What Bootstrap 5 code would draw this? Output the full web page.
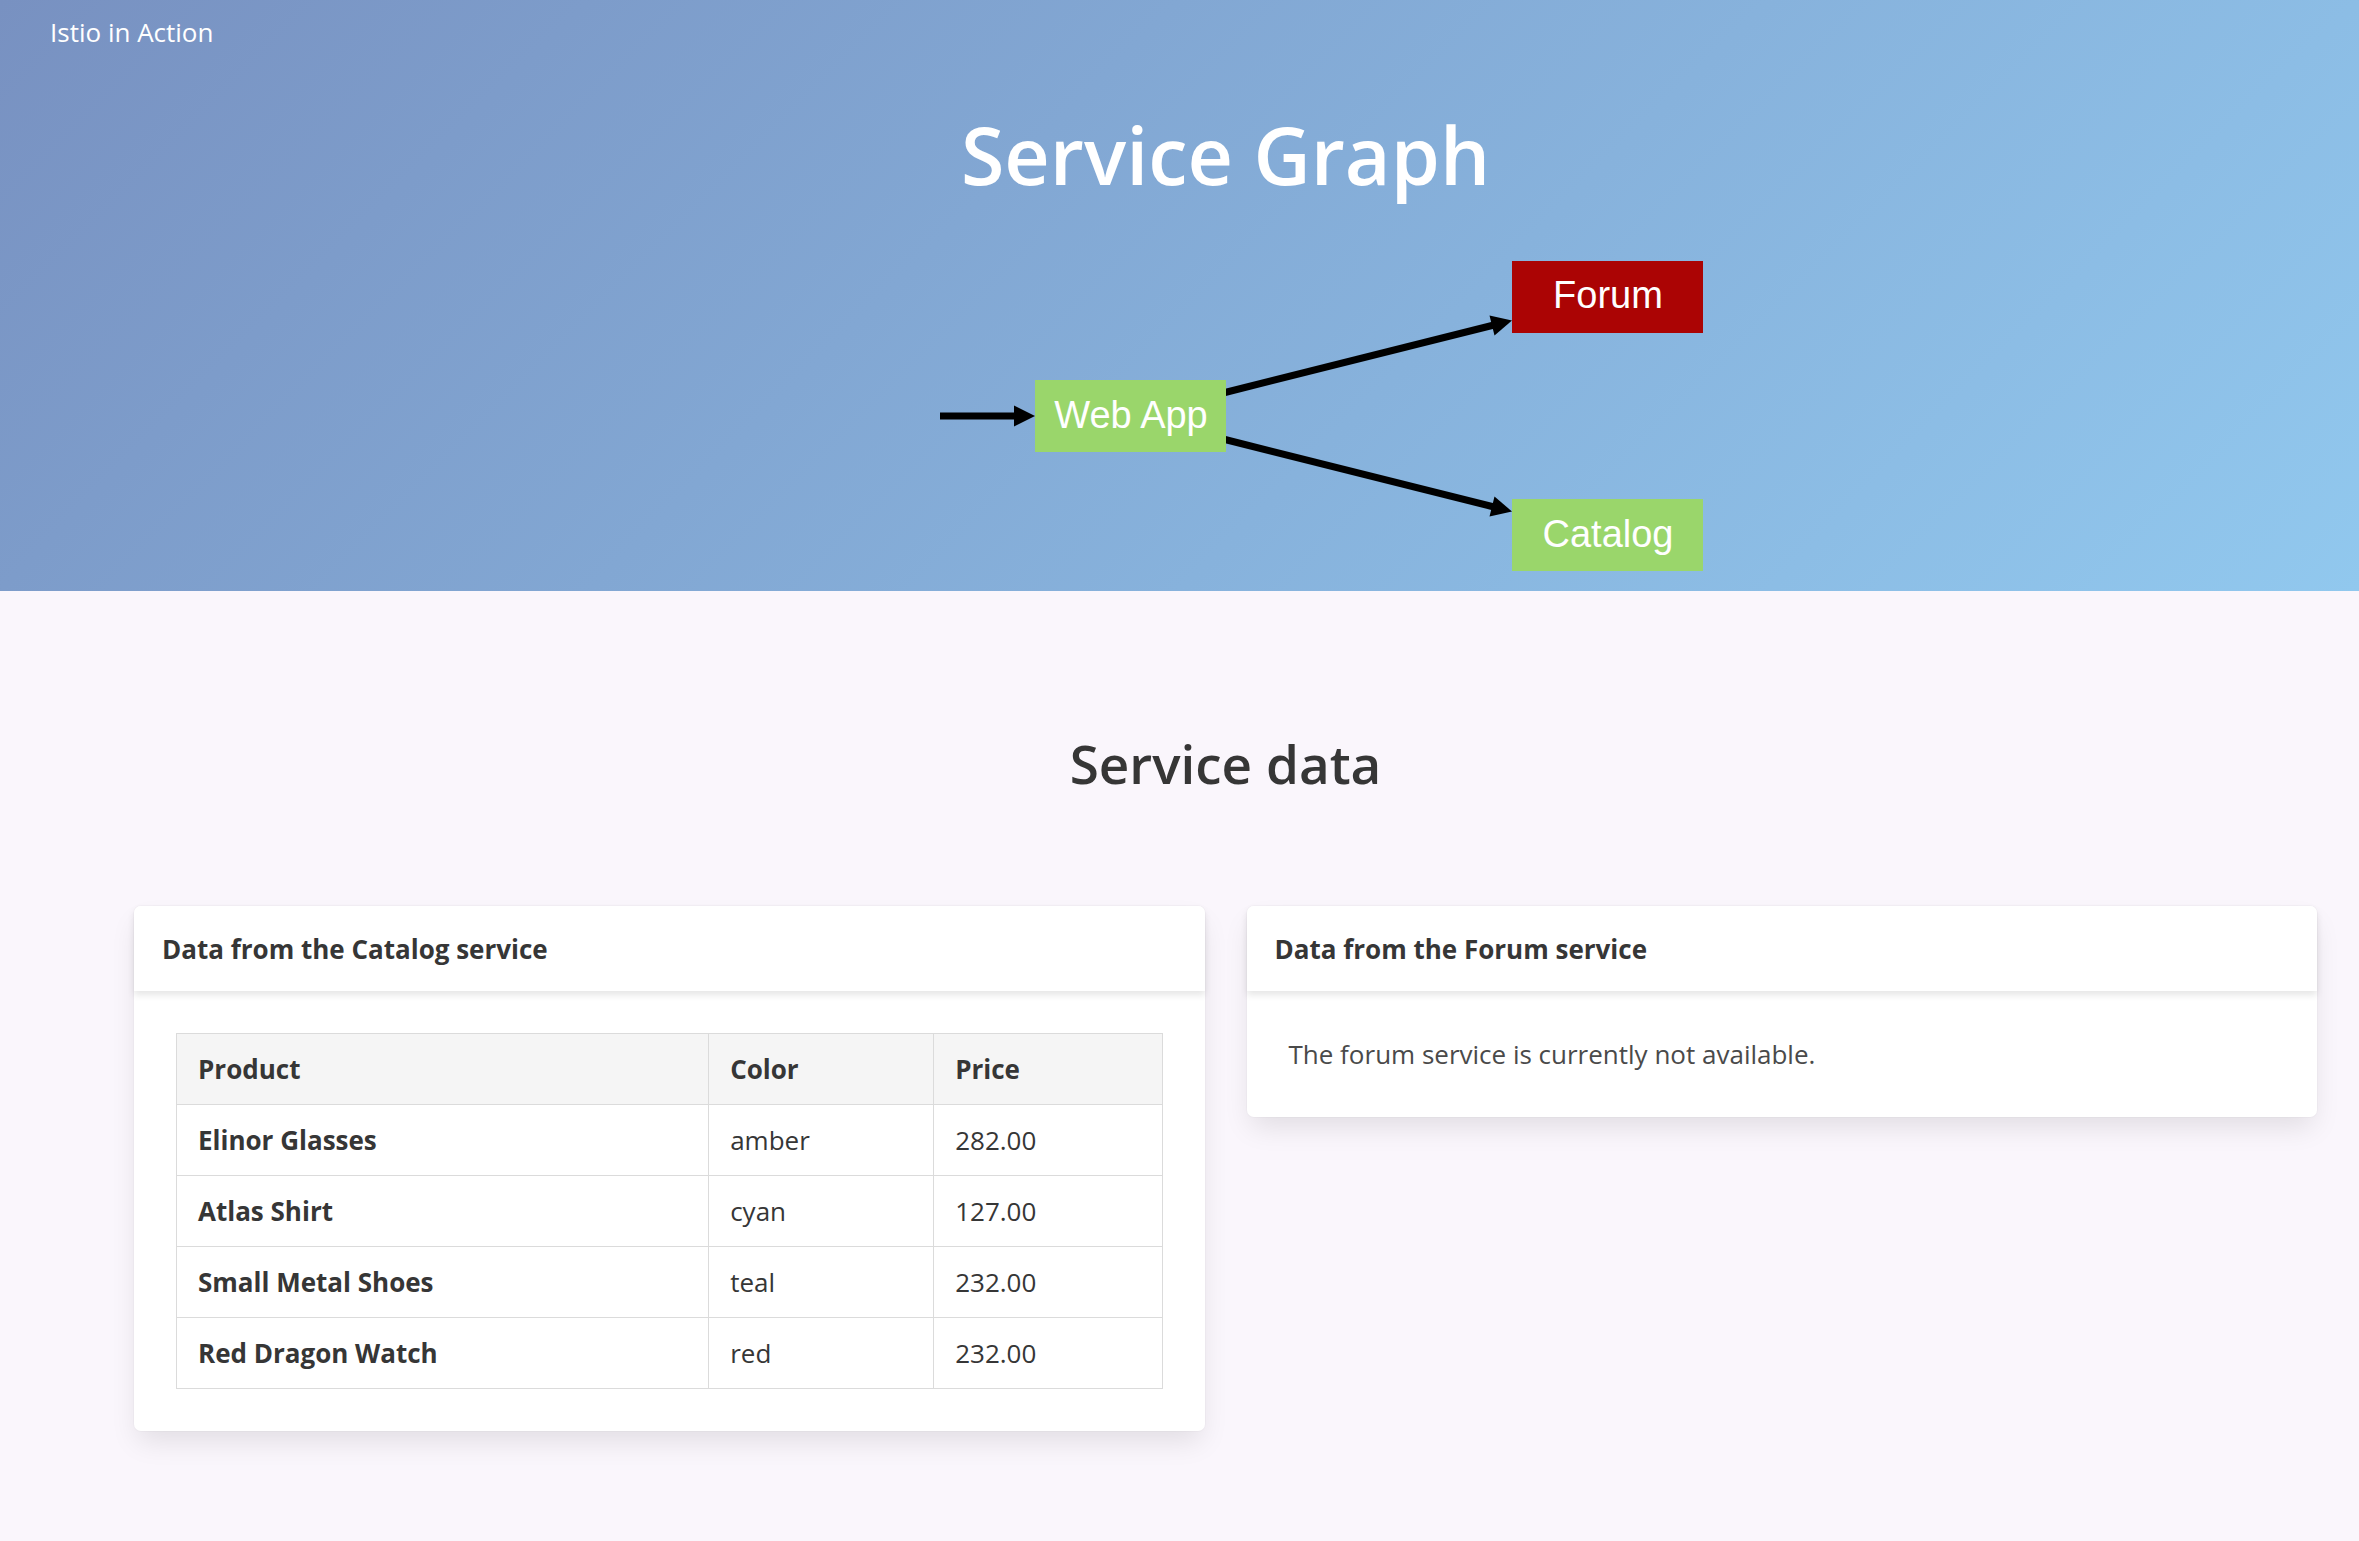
<!DOCTYPE html>
<html lang="en">
<head>
<meta charset="utf-8">
<meta name="viewport" content="width=device-width, initial-scale=1">
<title>Istio in Action</title>
<link rel="stylesheet" href="https://cdn.jsdelivr.net/npm/bootstrap@5.3.0/dist/css/bootstrap.min.css">
<style>
  body { background: #faf6fc; color: #363636; font-family: "Open Sans", "Noto Sans", sans-serif; font-size: 26px; line-height: 42px; }
  .hero { background: linear-gradient(135deg, #7891c1 0%, #91c8ee 100%); padding-bottom: 20px; }
  .brand-link { padding: 11px 50px; }
  .offset-main { margin-left: 92px; padding: 0 42px; }
  .hero-title { font-size: 79px; font-weight: 600; line-height: 96px; margin: 43px 0 58px; }
  .graph { width: 955px; max-width: 100%; height: auto; }
  .graph text { font-family: "Liberation Sans", Arial, sans-serif; font-size: 38px; fill: #fff; text-anchor: middle; }
  .graph .flow { stroke: #000; stroke-width: 7; }
  .data-title { font-size: 53px; font-weight: 600; line-height: 64px; margin: 141px 0 110px; }
  .panels { --bs-gutter-x: 42px; }
  .panel { --bs-card-border-width: 0; --bs-card-border-radius: 7px; --bs-card-color: #4a4a4a; --bs-card-spacer-x: 42px; --bs-card-spacer-y: 42px; box-shadow: 0 14px 28px -4px rgba(10,10,10,.1), 0 0 0 1px rgba(10,10,10,.02); }
  .panel .card-header { background: #fff; color: #363636; font-size: 26px; font-weight: 700; line-height: 42px; padding: 22px 28px 21px; border-radius: 7px 7px 0 0; box-shadow: 0 4px 7px rgba(10,10,10,.1); }
  .products { --bs-table-color: #363636; border-color: #dbdbdb; }
  .products > :not(caption) > * > * { padding: 14px 21px; }
  .products thead th { background: #f5f5f5; }
  .col-product { width: 54%; }
  .col-color { width: 225px; }
</style>
<script src="https://cdn.jsdelivr.net/npm/bootstrap@5.3.0/dist/js/bootstrap.bundle.min.js" defer></script>
</head>
<body>
<header class="hero">
  <nav class="d-flex">
    <a class="brand-link text-white text-decoration-none" href="#">Istio in Action</a>
  </nav>
  <div class="offset-main text-center">
    <h1 class="hero-title text-white">Service Graph</h1>
    <svg class="graph d-block mx-auto" viewBox="0 0 955 310" role="img" aria-label="Service graph">
      <line class="flow" x1="192" y1="155" x2="268" y2="155"/>
      <path d="M266 144.500L287 155L266 165.500Z"/>
      <line class="flow" x1="477" y1="131.500" x2="746" y2="64"/>
      <path d="M741.500 54.500L764 59.500L746.500 74.500Z"/>
      <line class="flow" x1="477" y1="178.500" x2="746" y2="246"/>
      <path d="M746.500 235.500L764 250.500L741.500 255.500Z"/>
      <rect x="287" y="119" width="191" height="72" fill="#9ad66b"/>
      <rect x="764" y="0" width="191" height="72" fill="#ab0404"/>
      <rect x="764" y="238" width="191" height="72" fill="#9ad66b"/>
      <text x="383" y="167">Web App</text>
      <text x="860" y="47">Forum</text>
      <text x="860" y="286">Catalog</text>
    </svg>
  </div>
</header>
<main class="offset-main pb-5">
  <h2 class="data-title text-center">Service data</h2>
  <div class="row panels align-items-start">
    <div class="col-6">
      <section class="card panel">
        <h3 class="card-header border-0 mb-0">Data from the Catalog service</h3>
        <div class="card-body">
          <table class="table table-bordered products mb-0">
            <thead>
              <tr><th class="col-product" scope="col">Product</th><th class="col-color" scope="col">Color</th><th scope="col">Price</th></tr>
            </thead>
            <tbody>
              <tr><th scope="row">Elinor Glasses</th><td>amber</td><td>282.00</td></tr>
              <tr><th scope="row">Atlas Shirt</th><td>cyan</td><td>127.00</td></tr>
              <tr><th scope="row">Small Metal Shoes</th><td>teal</td><td>232.00</td></tr>
              <tr><th scope="row">Red Dragon Watch</th><td>red</td><td>232.00</td></tr>
            </tbody>
          </table>
        </div>
      </section>
    </div>
    <div class="col-6">
      <section class="card panel">
        <h3 class="card-header border-0 mb-0">Data from the Forum service</h3>
        <div class="card-body">
          <p class="mb-0">The forum service is currently not available.</p>
        </div>
      </section>
    </div>
  </div>
</main>
</body>
</html>
